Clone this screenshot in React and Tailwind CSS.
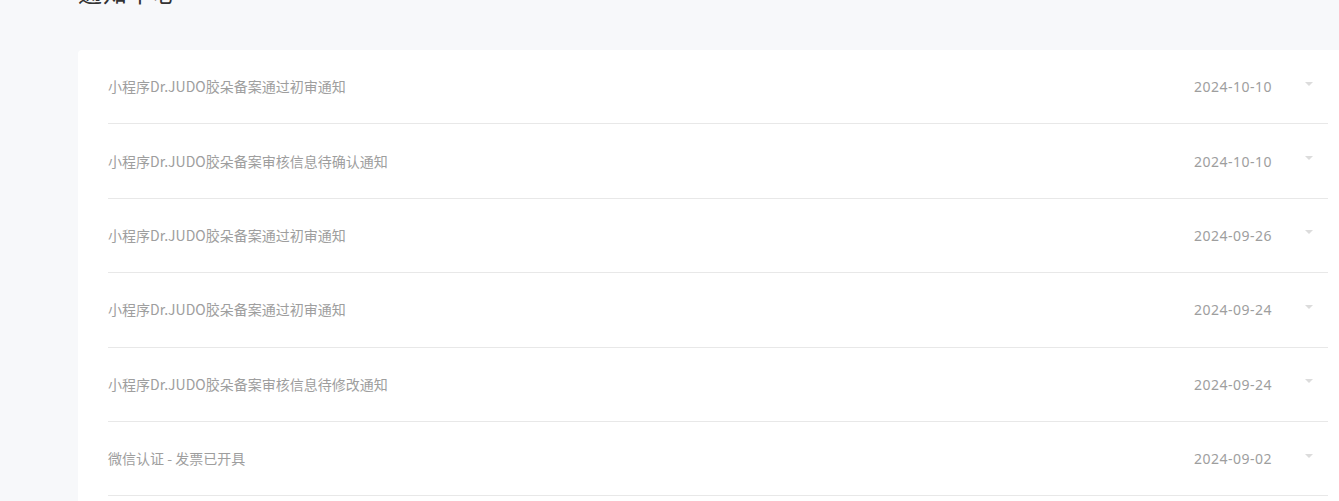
import React from "react";

const items = [
  { title: "小程序Dr.JUDO胶朵备案通过初审通知", date: "2024-10-10" },
  { title: "小程序Dr.JUDO胶朵备案审核信息待确认通知", date: "2024-10-10" },
  { title: "小程序Dr.JUDO胶朵备案通过初审通知", date: "2024-09-26" },
  { title: "小程序Dr.JUDO胶朵备案通过初审通知", date: "2024-09-24" },
  { title: "小程序Dr.JUDO胶朵备案审核信息待修改通知", date: "2024-09-24" },
  { title: "微信认证 - 发票已开具", date: "2024-09-02" },
];

export default function App() {
  return (
    <div
      className="w-[1339px] h-[501px] overflow-hidden bg-[#f7f8fa] pl-[78px]"
      style={{ fontFamily: '"Noto Sans", "Noto Sans CJK SC", sans-serif' }}
    >
      <h1 className="mt-[-20px] h-[24px] text-[24px] leading-[24px] font-normal text-[#333] tracking-[1px]" style={{ fontFamily: '"Noto Sans CJK SC", sans-serif' }}>
        通知中心
      </h1>
      <div className="mt-[46px] w-[1300px] bg-white rounded-[4px] pl-[30px] pb-[80px]">
        {items.map((it, i) => (
          <div
            key={i}
            className="w-[1220px] h-[74.4px] border-b border-[#e8e8e8] flex items-center"
          >
            <div
              className="flex-1 text-[14px] text-[#9e9e9e]"
              style={{ fontFamily: '"Noto Sans CJK SC", sans-serif' }}
            >
              {it.title}
            </div>
            <div className="text-[14px] text-[#9e9e9e] tracking-[0.5px]">{it.date}</div>
            <div className="ml-[33px] mr-[15px] mb-[6px] w-0 h-0 border-l-[4px] border-r-[4px] border-t-[4px] border-l-transparent border-r-transparent border-t-[#dcdcdc]" />
          </div>
        ))}
      </div>
    </div>
  );
}
